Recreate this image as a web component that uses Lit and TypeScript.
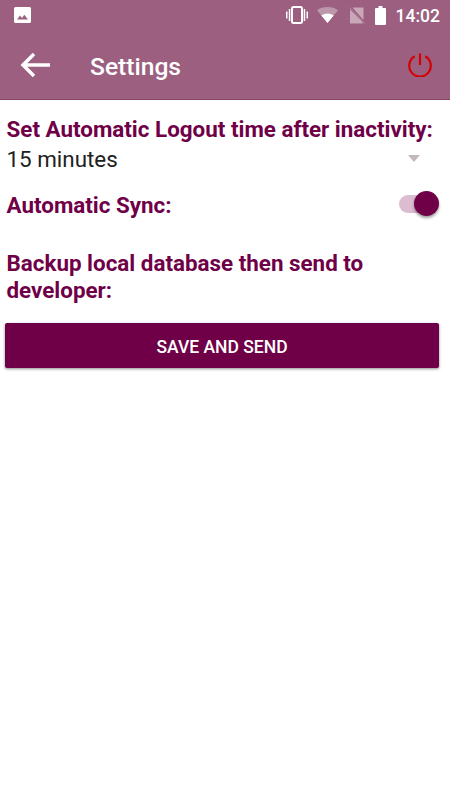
import { LitElement, css, html } from "lit";
import { customElement } from "lit/decorators.js";

@customElement("app-root")
export class AppRoot extends LitElement {
  render() {
    return html`
      <header class="appbar">
        <div class="status">
          <svg class="pic" viewBox="0 0 17 16" width="17" height="16">
            <rect width="17" height="16" rx="1.5" fill="#fff"></rect>
            <path d="M3 12.5 6 8.500 8 11 10.300 7.800 14 12.500Z" fill="#9c5f7f"></path>
          </svg>
          <span class="spacer"></span>
          <svg class="vib" viewBox="0 0 22 18" width="22" height="18">
            <path d="M0 5.500h1.500v7H0zM2.800 3h1.500v12H2.800zM20.500 5.500H22v7h-1.500zM17.700 3h1.500v12h-1.500z" fill="#fff"></path>
            <rect x="6" y="1" width="10" height="16" rx="1.500" fill="none" stroke="#fff" stroke-width="2"></rect>
          </svg>
          <svg class="wifi" viewBox="0 0 21 16" width="21" height="16">
            <path d="M0 3.200C2.900 1.100 6.500 0 10.500 0s7.600 1.100 10.500 3.200L10.500 16Z" fill="#fff" opacity=".35"></path>
            <path d="M4.300 8.600C6 7.300 8.200 6.600 10.500 6.600s4.500.7 6.200 2L10.500 16Z" fill="#fff"></path>
          </svg>
          <svg class="sim" viewBox="0 0 16 17" width="16" height="17">
            <path d="M1 2.500V16.500H13.500V15ZM3.500 .5 14.500 13V.5Z" fill="#fff" opacity=".45"></path>
            <path d="M.5 .5 15.500 16.500" stroke="#fff" stroke-width="1" opacity=".25"></path>
          </svg>
          <svg class="batt" viewBox="0 0 11 19" width="11" height="19">
            <path d="M3.500 0h4v2H10a1 1 0 0 1 1 1v15a1 1 0 0 1-1 1H1a1 1 0 0 1-1-1V3a1 1 0 0 1 1-1h2.500Z" fill="#fff"></path>
          </svg>
          <span class="time">14:02</span>
        </div>
        <div class="toolbar">
          <svg class="back" viewBox="0 0 30 26" width="30" height="26">
            <path d="M30 13H3M14 2 3 13l11 11" fill="none" stroke="#fff" stroke-width="3.500"></path>
          </svg>
          <span class="title">Settings</span>
          <span class="spacer"></span>
          <svg class="power" viewBox="0 0 24 24" width="24" height="24">
            <path d="M6.800 3.300A10.800 10.800 0 1 0 17.200 3.300M12 .5V12" fill="none" stroke="#d50000" stroke-width="2.200"></path>
          </svg>
        </div>
      </header>
      <main class="content">
        <div class="label">Set Automatic Logout time after inactivity:</div>
        <div class="select">
          <span>15 minutes</span>
          <span class="caret"></span>
        </div>
        <div class="sync">
          <span class="label">Automatic Sync:</span>
          <span class="switch"><span class="track"></span><span class="thumb"></span></span>
        </div>
        <div class="label backup">Backup local database then send to developer:</div>
        <button class="send">SAVE AND SEND</button>
      </main>
    `;
  }

  static styles = css`
    :host {
      display: block;
      width: 450px;
      height: 800px;
      background: #fff;
      font-family: Roboto, "Liberation Sans", sans-serif;
    }
    .appbar {
      background: #9c5f7f;
      height: 100px;
      box-sizing: border-box;
      border-bottom: 1px solid #8a4669;
    }
    .status {
      display: flex;
      align-items: center;
      height: 30px;
      padding: 0 10px 0 14px;
    }
    .spacer {
      flex: 1;
    }
    .vib {
      margin-right: 9px;
    }
    .wifi {
      margin-right: 11px;
    }
    .sim {
      margin-right: 10px;
    }
    .batt {
      margin-right: 10px;
    }
    .time {
      color: #fff;
      font-size: 17.500px;
      font-weight: 500;
      margin-top: 2px;
    }
    .toolbar {
      display: flex;
      align-items: center;
      box-sizing: border-box;
      height: 69px;
      padding: 1px 18px 0 20px;
    }
    .back {
      margin-right: 40px;
    }
    .title {
      color: #fff;
      font-size: 24.600px;
      font-weight: 500;
      margin-top: 2px;
    }
    .content {
      padding: 0 11px 0 6.500px;
    }
    .label {
      color: #6f0048;
      font-size: 22.400px;
      font-weight: 700;
      line-height: 25px;
    }
    .content > .label:first-child {
      padding-top: 17px;
    }
    .select {
      display: flex;
      justify-content: space-between;
      align-items: center;
      color: #212121;
      font-size: 22.400px;
      height: 29px;
      margin-top: 2px;
    }
    .caret {
      width: 0;
      height: 0;
      margin-right: 19px;
      border-left: 6px solid transparent;
      border-right: 6px solid transparent;
      border-top: 7px solid #c4b8b8;
    }
    .sync {
      display: flex;
      justify-content: space-between;
      align-items: center;
      height: 32px;
      margin-top: 16px;
    }
    .switch {
      position: relative;
      width: 40px;
      height: 26px;
      margin-bottom: 2px;
    }
    .track {
      position: absolute;
      left: 0;
      top: 4px;
      width: 36px;
      height: 18px;
      border-radius: 9px;
      background: #dcbcd1;
    }
    .thumb {
      position: absolute;
      right: 0;
      top: 0;
      width: 25px;
      height: 25px;
      border-radius: 50%;
      background: #6f0048;
      box-shadow: 0 2px 3px rgba(0, 0, 0, 0.4);
    }
    .backup {
      margin-top: 29px;
      line-height: 27px;
    }
    .send {
      display: block;
      width: 434px;
      height: 45px;
      margin: 19px 0 0 -1.500px;
      padding: 3px 0 0;
      border: 0;
      border-radius: 2px;
      background: #6f0048;
      color: #fff;
      font-family: inherit;
      font-size: 17.500px;
      font-weight: 500;
      box-shadow: 0 1px 3px rgba(0, 0, 0, 0.45);
    }
  `;
}
